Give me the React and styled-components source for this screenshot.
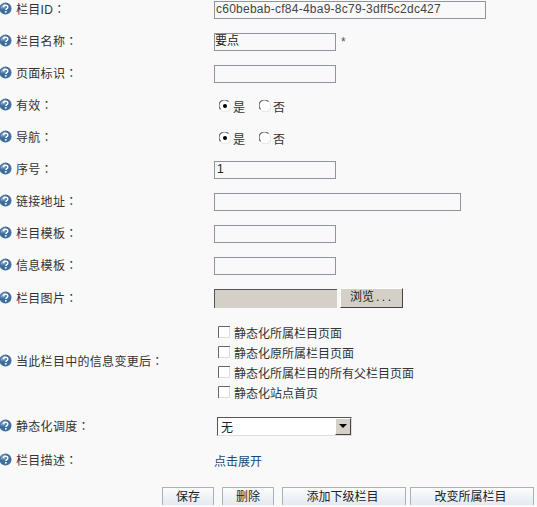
import React from 'react'
import styled, { createGlobalStyle } from 'styled-components'

const GlobalStyle = createGlobalStyle`
    html, body {
        margin: 0;
        height: 100%;
        overflow: hidden;
        background: #f9f9f9;
    }
`

const FONT = `"Liberation Sans", "Noto Sans CJK SC", sans-serif`

const Page = styled.div`
    width: 537px;
    margin-top: -7px;
    font-family: ${FONT};
    font-size: 12px;
    color: #333;
    background: #f9f9f9;
`

const Row = styled.div`
    display: grid;
    grid-template-columns: 214px 1fr;
    align-items: center;
    height: ${(p) => p.$height || 32}px;
`

const Label = styled.div`
    display: flex;
    align-items: center;
    gap: 4px;
    padding-bottom: ${(p) => (p.$low ? 0 : 2)}px;
    letter-spacing: 0.3px;
    color: #333;
`

const Colon = styled.span`
    font-family: "Noto Sans CJK TC", sans-serif;
`

const Value = styled.div`
    display: flex;
    align-items: center;
    padding-top: 2px;
`

const TextBox = styled.div`
    box-sizing: border-box;
    width: ${(p) => p.$width || 122}px;
    height: 18px;
    line-height: 15px;
    padding-left: ${(p) => p.$pad || 0}px;
    border: 1px solid #8e959c;
    background: #f9f9f9;
    color: ${(p) => p.$color || '#222'};
    white-space: nowrap;
    letter-spacing: ${(p) => p.$spacing || 0}px;
`

const Star = styled.span`
    margin-left: 5px;
    color: #555;
`

const RadioGroup = styled.div`
    display: flex;
    align-items: center;
    padding-left: 5px;
    gap: 2px;
`

const RadioLabel = styled.span`
    margin-right: 12px;

    &:last-child {
        margin-right: 0;
    }
`

const FileField = styled.div`
    box-sizing: border-box;
    width: 123px;
    height: 19px;
    background: #d4d0c8;
    border-top: 1px solid #555;
    border-left: 1px solid #555;
`

const BrowseButton = styled.div`
    box-sizing: border-box;
    width: 63px;
    height: 20px;
    margin-left: 3px;
    padding-left: 9px;
    line-height: 17px;
    white-space: nowrap;
    background: #d4d0c8;
    color: #222;
    border-top: 1px solid #fff;
    border-left: 1px solid #fff;
    border-right: 1px solid #444;
    border-bottom: 1px solid #444;
`

const BrowseDots = styled.span`
    margin-left: 2px;
    letter-spacing: 2.5px;
`

const CheckList = styled.div`
    display: flex;
    flex-direction: column;
    padding: 2px 0 0 4px;
`

const CheckRow = styled.div`
    display: flex;
    align-items: center;
    gap: 4px;
    height: 20px;
`

const Select = styled.div`
    box-sizing: border-box;
    display: flex;
    justify-content: space-between;
    align-items: center;
    width: 135px;
    height: 19px;
    margin-left: 3px;
    padding-left: 3px;
    background: #fff;
    color: #222;
    border-top: 1px solid #555;
    border-left: 1px solid #555;
    border-right: 1px solid #ddd;
    border-bottom: 1px solid #ddd;
`

const SelectArrow = styled.div`
    box-sizing: border-box;
    display: flex;
    align-items: center;
    justify-content: center;
    width: 16px;
    height: 17px;
    background: #d4d0c8;
    border-top: 1px solid #fff;
    border-left: 1px solid #fff;
    border-right: 1px solid #444;
    border-bottom: 1px solid #444;

    &::after {
        content: '';
        border-left: 4px solid transparent;
        border-right: 4px solid transparent;
        border-top: 4px solid #000;
    }
`

const Link = styled.span`
    color: #1d4a6e;
`

const Toolbar = styled.div`
    display: flex;
    gap: 8px;
    margin-top: 12px;
    padding-left: 162px;
`

const Button = styled.div`
    box-sizing: border-box;
    width: ${(p) => p.$width}px;
    height: 18px;
    margin-left: ${(p) => p.$shift || 0}px;
    padding-right: ${(p) => (p.$width > 100 ? 3 : 0)}px;
    line-height: 18px;
    text-align: center;
    color: #222;
    border: 1px solid #a9b0b8;
    border-bottom: none;
    background: linear-gradient(#fbfcfd, #e4eaf1);
`

const HelpIcon = () => (
    <svg width="13" height="13" viewBox="0 0 13 13" style={{ marginLeft: -1, flex: 'none' }}>
        <circle cx="6.5" cy="6.5" r="6" fill="#3f6f9e" />
        <path d="M1.5 6.5a5 5 0 0 1 5-5v5z" fill="#7fa3c4" />
        <path
            d="M4.4 5.1c.1-1.3 1-1.9 2.2-1.9 1.3 0 2.2.7 2.2 1.8 0 1.6-1.9 1.5-1.9 3"
            fill="none"
            stroke="#fff"
            strokeWidth="1.5"
        />
        <rect x="6" y="9" width="1.6" height="1.6" fill="#fff" />
    </svg>
)

const Radio = ({ checked }) => (
    <svg width="12" height="12" viewBox="0 0 12 12">
        <circle cx="6" cy="6" r="5.5" fill="#fff" />
        <path d="M1.6 9.4A5.5 5.5 0 0 1 9.4 1.6" fill="none" stroke="#666" strokeWidth="1.2" />
        <path d="M2.5 10.4A5.5 5.5 0 0 0 10.4 2.5" fill="none" stroke="#ddd" strokeWidth="1" />
        {checked && <circle cx="6" cy="6" r="2" fill="#000" />}
    </svg>
)

const Checkbox = () => (
    <svg width="12" height="12" viewBox="0 0 12 12">
        <rect width="12" height="12" fill="#fff" />
        <path d="M.5 12V.5H12" fill="none" stroke="#666" />
        <path d="M11.5 1v10.5H1" fill="none" stroke="#ddd" />
    </svg>
)

const Field = ({ label, height, low, children }) => (
    <Row $height={height}>
        <Label $low={low}>
            <HelpIcon />
            <span>
                {label}
                <Colon>：</Colon>
            </span>
        </Label>
        <Value>{children}</Value>
    </Row>
)

const YesNo = () => (
    <RadioGroup>
        <Radio checked />
        <RadioLabel>是</RadioLabel>
        <Radio />
        <RadioLabel>否</RadioLabel>
    </RadioGroup>
)

const checks = ['静态化所属栏目页面', '静态化原所属栏目页面', '静态化所属栏目的所有父栏目页面', '静态化站点首页']

const App = () => (
    <>
        <GlobalStyle />
        <Page>
            <Field label="栏目ID">
                <TextBox $width={272} $pad={1} $spacing={0.25} $color="#444">c60bebab-cf84-4ba9-8c79-3dff5c2dc427</TextBox>
            </Field>
            <Field label="栏目名称">
                <TextBox>要点</TextBox>
                <Star>*</Star>
            </Field>
            <Field label="页面标识">
                <TextBox />
            </Field>
            <Field label="有效">
                <YesNo />
            </Field>
            <Field label="导航">
                <YesNo />
            </Field>
            <Field label="序号">
                <TextBox $pad={2}>1</TextBox>
            </Field>
            <Field label="链接地址">
                <TextBox $width={247} />
            </Field>
            <Field label="栏目模板">
                <TextBox />
            </Field>
            <Field label="信息模板">
                <TextBox />
            </Field>
            <Field label="栏目图片" low>
                <FileField />
                <BrowseButton>
                    浏览<BrowseDots>...</BrowseDots>
                </BrowseButton>
            </Field>
            <Field label="当此栏目中的信息变更后" height={94} low>
                <CheckList>
                    {checks.map((text) => (
                        <CheckRow key={text}>
                            <Checkbox />
                            {text}
                        </CheckRow>
                    ))}
                </CheckList>
            </Field>
            <Field label="静态化调度" height={36} low>
                <Select>
                    无
                    <SelectArrow />
                </Select>
            </Field>
            <Field label="栏目描述" height={32} low>
                <Link>点击展开</Link>
            </Field>
            <Toolbar>
                <Button $width={52}>保存</Button>
                <Button $width={52}>删除</Button>
                <Button $width={124}>添加下级栏目</Button>
                <Button $width={124} $shift={-4}>改变所属栏目</Button>
            </Toolbar>
        </Page>
    </>
)

export default App
